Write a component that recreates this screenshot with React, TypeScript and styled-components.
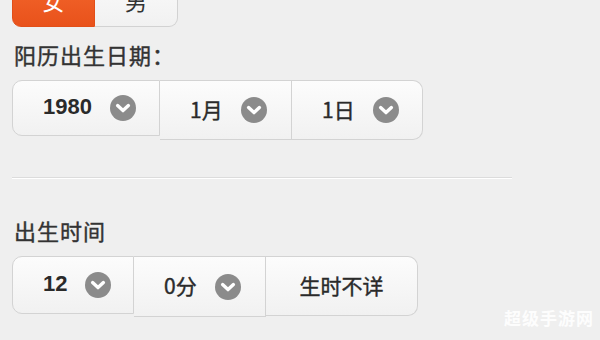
import React from 'react';
import styled, { createGlobalStyle } from 'styled-components';

const GlobalStyle = createGlobalStyle`
  html, body {
    margin: 0;
    padding: 0;
    background: #efefef;
  }
  body {
    font-family: "Noto Sans CJK SC", "Noto Sans", sans-serif;
    color: #333;
    overflow: hidden;
  }
`;

const Page = styled.div`
  position: relative;
  width: 600px;
  height: 340px;
  padding-left: 12px;
  box-sizing: border-box;
  overflow: hidden;
  display: flex;
  flex-direction: column;
`;

const Toggle = styled.div`
  display: flex;
  margin-top: -28px;
  height: 55px;
`;

const ToggleButton = styled.div<{ $active?: boolean }>`
  width: 83px;
  box-sizing: border-box;
  display: flex;
  align-items: center;
  justify-content: center;
  font-size: 22px;
  color: ${p => (p.$active ? '#fff' : '#333')};
  background: ${p =>
    p.$active
      ? 'linear-gradient(#f4692f, #e9521b)'
      : 'linear-gradient(#fbfbfb, #f1f1f1)'};
  border: 1px solid ${p => (p.$active ? '#e24f19' : '#d2d2d2')};
  border-radius: ${p => (p.$active ? '0 0 0 9px' : '0 0 9px 0')};
  border-left-width: ${p => (p.$active ? '1px' : '0')};
`;

const Label = styled.div<{ $top: number }>`
  margin-top: ${p => p.$top}px;
  padding-left: 2px;
  font-size: 22px;
  letter-spacing: 1px;
  line-height: 30px;
  height: 30px;
  color: #333;
  -webkit-text-stroke: 0.4px #333;
`;

const Group = styled.div<{ $top: number }>`
  margin-top: ${p => p.$top}px;
  display: flex;
  align-items: flex-start;
`;

const Segment = styled.div<{ $w: number; $h: number; $pos: 'first' | 'mid' | 'last'; $center?: boolean }>`
  width: ${p => p.$w}px;
  height: ${p => p.$h}px;
  box-sizing: border-box;
  display: flex;
  align-items: center;
  justify-content: ${p => (p.$center ? 'center' : 'flex-start')};
  gap: 18px;
  padding-left: ${p => (p.$center ? 0 : 30)}px;
  background: linear-gradient(#fcfcfc, #f1f1f1);
  border: 1px solid #d3d3d3;
  border-left-width: ${p => (p.$pos === 'first' ? 1 : 0)}px;
  border-radius: ${p =>
    p.$pos === 'first' ? '10px 0 0 10px' : p.$pos === 'last' ? '0 10px 10px 0' : '0'};
  color: #2a2a2a;
`;

const Value = styled.span<{ $bold?: boolean }>`
  font-weight: ${p => (p.$bold ? 700 : 400)};
  font-family: ${p => (p.$bold ? '"Liberation Sans", "Noto Sans CJK SC", sans-serif' : 'inherit')};
  font-size: ${p => (p.$bold ? 22 : 21)}px;
  line-height: 1;
  margin-top: -2px;
  -webkit-text-stroke: ${p => (p.$bold ? 0 : 0.4)}px #2a2a2a;
`;

const Divider = styled.div`
  margin-top: 37px;
  width: 500px;
  height: 1px;
  background: #dcdcdc;
  border-bottom: 1px solid #ffffff;
`;

const Watermark = styled.div`
  position: absolute;
  right: 6px;
  bottom: 10px;
  font-size: 17px;
  font-weight: 700;
  color: rgba(255, 255, 255, 0.9);
  letter-spacing: 1px;
`;

const Chevron = () => (
  <svg width="26" height="26" viewBox="0 0 26 26">
    <circle cx="13" cy="13" r="13" fill="#8b8b8b" />
    <path d="M7.6 10.6 L13 15.6 L18.4 10.6" fill="none" stroke="#fff" strokeWidth="3.4" strokeLinecap="round" strokeLinejoin="round" />
  </svg>
);

export default function App() {
  return (
    <>
      <GlobalStyle />
      <Page>
        <Toggle>
          <ToggleButton $active>女</ToggleButton>
          <ToggleButton>男</ToggleButton>
        </Toggle>

        <Label $top={12}>阳历出生日期：</Label>
        <Group $top={11}>
          <Segment $w={148} $h={56} $pos="first">
            <Value $bold>1980</Value>
            <Chevron />
          </Segment>
          <Segment $w={132} $h={60} $pos="mid">
            <Value>1月</Value>
            <Chevron />
          </Segment>
          <Segment $w={131} $h={60} $pos="last">
            <Value>1日</Value>
            <Chevron />
          </Segment>
        </Group>

        <Divider />

        <Label $top={36}>出生时间</Label>
        <Group $top={11}>
          <Segment $w={122} $h={58} $pos="first">
            <Value $bold>12</Value>
            <Chevron />
          </Segment>
          <Segment $w={132} $h={61} $pos="mid">
            <Value>0分</Value>
            <Chevron />
          </Segment>
          <Segment $w={152} $h={60} $pos="last" $center>
            <Value>生时不详</Value>
          </Segment>
        </Group>

        <Watermark>超级手游网</Watermark>
      </Page>
    </>
  );
}
